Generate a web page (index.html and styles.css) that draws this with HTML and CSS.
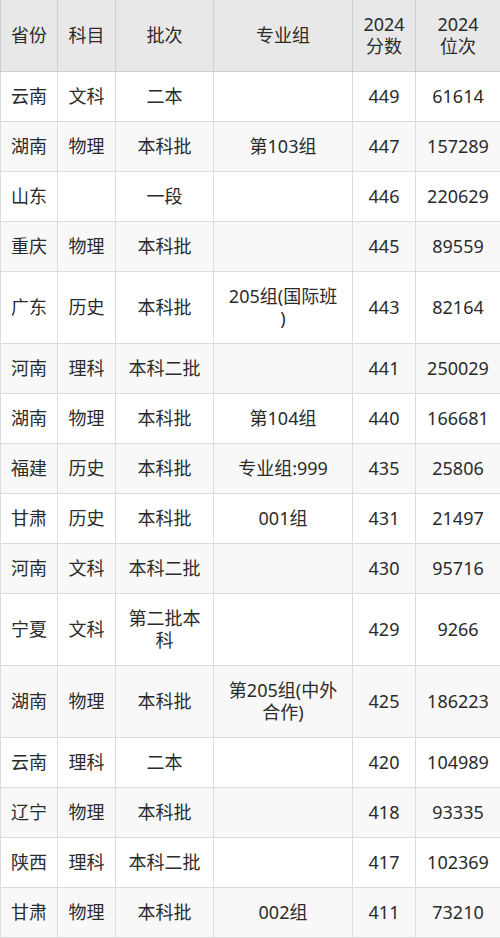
FILE: index.html
```html
<!DOCTYPE html>
<html lang="zh-CN">
<head>
<meta charset="utf-8">
<link rel="stylesheet" href="styles.css">
</head>
<body>
<div class="table">
  <div class="row head"><div class="c">省份</div><div class="c">科目</div><div class="c">批次</div><div class="c">专业组</div><div class="c">2024<br>分数</div><div class="c">2024<br>位次</div></div>
  <div class="row"><div class="c">云南</div><div class="c">文科</div><div class="c">二本</div><div class="c"></div><div class="c">449</div><div class="c">61614</div></div>
  <div class="row alt"><div class="c">湖南</div><div class="c">物理</div><div class="c">本科批</div><div class="c">第103组</div><div class="c">447</div><div class="c">157289</div></div>
  <div class="row"><div class="c">山东</div><div class="c"></div><div class="c">一段</div><div class="c"></div><div class="c">446</div><div class="c">220629</div></div>
  <div class="row alt"><div class="c">重庆</div><div class="c">物理</div><div class="c">本科批</div><div class="c"></div><div class="c">445</div><div class="c">89559</div></div>
  <div class="row"><div class="c">广东</div><div class="c">历史</div><div class="c">本科批</div><div class="c">205组(国际班)</div><div class="c">443</div><div class="c">82164</div></div>
  <div class="row alt"><div class="c">河南</div><div class="c">理科</div><div class="c">本科二批</div><div class="c"></div><div class="c">441</div><div class="c">250029</div></div>
  <div class="row"><div class="c">湖南</div><div class="c">物理</div><div class="c">本科批</div><div class="c">第104组</div><div class="c">440</div><div class="c">166681</div></div>
  <div class="row alt"><div class="c">福建</div><div class="c">历史</div><div class="c">本科批</div><div class="c">专业组:999</div><div class="c">435</div><div class="c">25806</div></div>
  <div class="row"><div class="c">甘肃</div><div class="c">历史</div><div class="c">本科批</div><div class="c">001组</div><div class="c">431</div><div class="c">21497</div></div>
  <div class="row alt"><div class="c">河南</div><div class="c">文科</div><div class="c">本科二批</div><div class="c"></div><div class="c">430</div><div class="c">95716</div></div>
  <div class="row"><div class="c">宁夏</div><div class="c">文科</div><div class="c">第二批本科</div><div class="c"></div><div class="c">429</div><div class="c">9266</div></div>
  <div class="row alt"><div class="c">湖南</div><div class="c">物理</div><div class="c">本科批</div><div class="c">第205组(中外合作)</div><div class="c">425</div><div class="c">186223</div></div>
  <div class="row"><div class="c">云南</div><div class="c">理科</div><div class="c">二本</div><div class="c"></div><div class="c">420</div><div class="c">104989</div></div>
  <div class="row alt"><div class="c">辽宁</div><div class="c">物理</div><div class="c">本科批</div><div class="c"></div><div class="c">418</div><div class="c">93335</div></div>
  <div class="row"><div class="c">陕西</div><div class="c">理科</div><div class="c">本科二批</div><div class="c"></div><div class="c">417</div><div class="c">102369</div></div>
  <div class="row alt"><div class="c">甘肃</div><div class="c">物理</div><div class="c">本科批</div><div class="c">002组</div><div class="c">411</div><div class="c">73210</div></div>
</div>
</body>
</html>
```
FILE: styles.css
```css
html, body {
  margin: 0;
  padding: 0;
  background: #ffffff;
}
body {
  font-family: "Noto Sans", "Noto Sans CJK SC", sans-serif;
  font-size: 18px;
  color: #2b2b2b;
}
.table {
  width: 500px;
  display: flex;
  flex-direction: column;
}
.row {
  display: grid;
  grid-template-columns: 58px 58px 98px 139px 63px 84px;
  background: #ffffff;
}
.row.alt {
  background: #f8f8f8;
}
.row.head {
  background: #e8e8e8;
}
.c {
  display: flex;
  align-items: center;
  justify-content: center;
  text-align: center;
  line-height: 22px;
  padding: 13px 12px 14px;
  border-right: 1px solid #dcdcdc;
  border-bottom: 1px solid #dcdcdc;
  box-sizing: border-box;
  min-width: 0;
  word-break: break-all;
  line-break: anywhere;
}
.c:first-child {
  border-left: 1px solid #dcdcdc;
  padding-left: 4px;
  padding-right: 4px;
}
.c:nth-child(2),
.c:nth-child(5),
.c:nth-child(6) {
  padding-left: 4px;
  padding-right: 4px;
}
.c:nth-child(4) {
  padding-left: 14px;
  padding-right: 14px;
}
.c:last-child {
  border-right: none;
}
.head .c {
  border-color: #d0d0d0;
}
```
